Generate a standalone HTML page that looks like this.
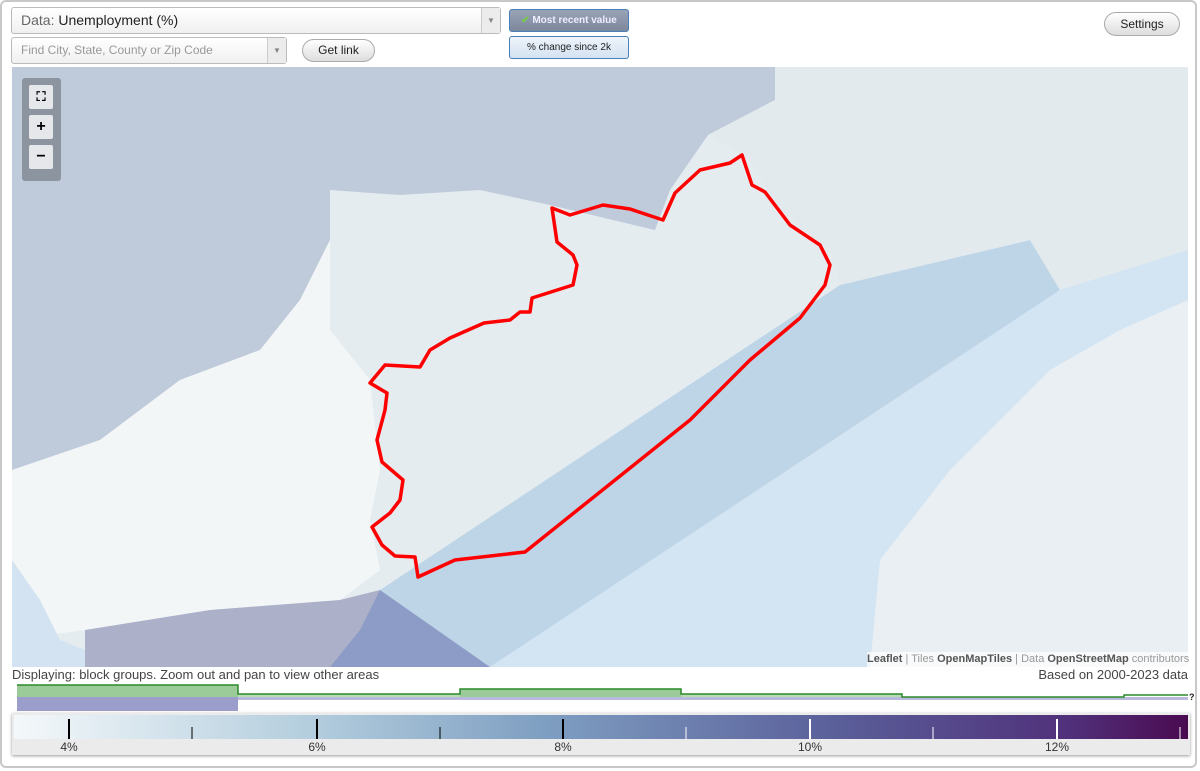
<!DOCTYPE html>
<html><head><style>
body{margin:0;width:1200px;height:771px;background:#fff;font-family:"Liberation Sans",sans-serif;overflow:hidden;position:relative}
.frame{position:absolute;left:0;top:0;width:1197px;height:768px;border:1px solid #c8c8c8;border-radius:6px;box-sizing:border-box;border-width:2px}
.sel{position:absolute;border:1px solid #bbb;border-radius:3px;background:linear-gradient(#fff,#f0f0f0);box-sizing:border-box}
.arr{position:absolute;right:0;top:0;bottom:0;width:18px;border-left:1px solid #ccc;background:#ececec;color:#888;font-size:8px;text-align:center}
.btn{position:absolute;border:1px solid #aaa;border-radius:12px;background:linear-gradient(#fff,#ddd);font-size:12px;text-align:center;box-sizing:border-box;color:#222}
.tb{position:absolute;border:1px solid #4a7fb8;border-radius:3px;font-size:10px;text-align:center;box-sizing:border-box}
.zb{position:absolute;left:29px;width:24px;height:24px;background:#e6e7ea;border-radius:2px;text-align:center;font-weight:bold;font-size:16px;line-height:24px}
</style></head><body>
<div class="frame"></div>
<div class="sel" style="left:11px;top:7px;width:490px;height:27px;font-size:14px;line-height:25px;padding-left:9px;color:#222"><span style="color:#666">Data:</span> Unemployment (%)<div class="arr" style="line-height:25px">▼</div></div>
<div class="sel" style="left:11px;top:37px;width:276px;height:27px;font-size:12px;line-height:25px;padding-left:9px;color:#999">Find City, State, County or Zip Code<div class="arr" style="line-height:25px">▼</div></div>
<div class="btn" style="left:302px;top:39px;width:73px;height:23px;line-height:21px">Get link</div>
<div class="tb" style="left:509px;top:9px;width:120px;height:23px;background:linear-gradient(#9aa3b6,#7d879d);color:#eef;font-weight:bold;line-height:21px"><span style="color:#7c4">✔</span> Most recent value</div>
<div class="tb" style="left:509px;top:36px;width:120px;height:23px;background:linear-gradient(#eef4fb,#d4e2f1);color:#222;line-height:21px">% change since 2k</div>
<div class="btn" style="left:1104px;top:12px;width:76px;height:24px;line-height:22px">Settings</div>

<svg style="position:absolute;left:12px;top:67px" width="1176" height="600" viewBox="12 67 1176 600">
<rect x="12" y="67" width="1176" height="600" fill="#e4ecf0"/>
<polygon points="12,67 775,67 775,100 708,135 670,190 655,230 550,205 480,190 400,195 330,190 330,240 300,300 260,350 180,380 100,440 12,470" fill="#bfcadb"/>
<polygon points="12,470 100,440 180,380 260,350 300,300 330,240 330,330 370,380 380,470 370,520 380,570 340,600 210,610 85,630 12,640" fill="#f3f6f7"/>
<polygon points="12,560 40,600 60,640 85,650 85,667 12,667" fill="#d3e3f2"/>
<polygon points="380,590 840,285 1030,240 1060,290 490,667 360,667" fill="#bed5e8"/>
<polygon points="490,667 1060,290 1188,250 1188,667" fill="#d3e4f3"/>
<polygon points="870,667 880,560 950,470 1000,420 1050,370 1120,330 1188,300 1188,667" fill="#e9eff2"/>
<polygon points="85,630 210,610 340,600 380,590 360,650 330,667 85,667" fill="#adb0c9"/>
<polygon points="380,590 490,667 330,667 360,630" fill="#8c9cc6"/>
<polygon points="775,67 1188,67 1188,250 1060,290 1030,240 840,285 830,250 780,210 750,160 708,135 775,100" fill="#e2eaee"/>
<path d="M742,155 L752,185 L765,192 L790,225 L820,245 L830,265 L825,285 L800,318 L750,360 L690,420 L525,552 L455,560 L418,577 L415,557 L395,556 L382,545 L372,527 L390,513 L400,500 L403,480 L382,462 L377,440 L385,410 L387,393 L370,383 L385,365 L420,367 L430,350 L450,338 L484,323 L510,320 L520,312 L530,312 L532,298 L573,285 L577,265 L573,255 L557,242 L552,208 L570,215 L603,205 L630,209 L663,220 L675,193 L700,170 L730,163 Z" fill="none" stroke="#f00" stroke-width="3.5" stroke-linejoin="round"/>
</svg>
<div style="position:absolute;left:867px;top:652px;width:321px;height:15px;background:rgba(255,255,255,.7);font-size:11px;line-height:15px;color:#999;text-align:right;padding-right:4px;box-sizing:border-box;white-space:nowrap"><b style="color:#555">Leaflet</b> | Tiles <b style="color:#555">OpenMapTiles</b> | Data <b style="color:#555">OpenStreetMap</b> contributors</div>
<div style="position:absolute;left:22px;top:78px;width:39px;height:103px;background:#8b949f;border-radius:3px"></div>
<div class="zb" style="top:85px;font-size:13px">⛶</div>
<div class="zb" style="top:115px">+</div>
<div class="zb" style="top:145px">−</div>

<div style="position:absolute;left:12px;top:667px;font-size:13px;color:#444">Displaying: block groups. Zoom out and pan to view other areas</div>
<div style="position:absolute;right:12px;top:667px;font-size:13px;color:#444">Based on 2000-2023 data</div>

<svg style="position:absolute;left:0;top:680px" width="1200" height="32">
<rect x="17" y="5" width="221" height="12" fill="#9bcb98"/>
<rect x="17" y="17" width="221" height="14" fill="#9b9dcb"/>
<rect x="238" y="17" width="950" height="3" fill="#b8b9dc"/>
<rect x="238" y="14" width="222" height="3" fill="#b8dab5"/>
<rect x="460" y="9" width="221" height="8" fill="#9bcb98"/>
<rect x="681" y="14" width="221" height="3" fill="#b8dab5"/>
<path d="M17,5 H238 V14 H460 V9 H681 V14 H902 V17 H1124 V15 H1188" fill="none" stroke="#2a8a2a" stroke-width="1.5"/>
<text x="1189" y="20" font-size="9" fill="#222" font-weight="bold">?</text>
</svg>

<div style="position:absolute;left:12px;top:713px;width:1178px;height:42px;background:#ebebeb;box-shadow:0 1px 3px #999"></div>
<svg style="position:absolute;left:14px;top:715px" width="1174" height="40">
<defs><linearGradient id="g"><stop offset="0" stop-color="#f4f8fa"/><stop offset=".25" stop-color="#b4cede"/><stop offset=".45" stop-color="#7f9fc2"/><stop offset=".7" stop-color="#5a5f9a"/><stop offset=".9" stop-color="#50307a"/><stop offset="1" stop-color="#4a0a50"/></linearGradient></defs>
<rect width="1174" height="24" fill="url(#g)"/>
<g stroke="#000" stroke-width="2"><line x1="55" y1="4" x2="55" y2="24"/><line x1="303" y1="4" x2="303" y2="24"/><line x1="549" y1="4" x2="549" y2="24"/></g>
<g stroke="#000" stroke-width="1"><line x1="178" y1="12" x2="178" y2="24"/><line x1="426" y1="12" x2="426" y2="24"/></g>
<g stroke="#fff" stroke-width="2"><line x1="796" y1="4" x2="796" y2="24"/><line x1="1043" y1="4" x2="1043" y2="24"/></g>
<g stroke="#fff" stroke-width="1"><line x1="672" y1="12" x2="672" y2="24"/><line x1="919" y1="12" x2="919" y2="24"/><line x1="1166" y1="12" x2="1166" y2="24"/></g>
<g font-size="12" fill="#333" text-anchor="middle" font-family="Liberation Sans"><text x="55" y="36">4%</text><text x="303" y="36">6%</text><text x="549" y="36">8%</text><text x="796" y="36">10%</text><text x="1043" y="36">12%</text></g>
</svg>
</body></html>
